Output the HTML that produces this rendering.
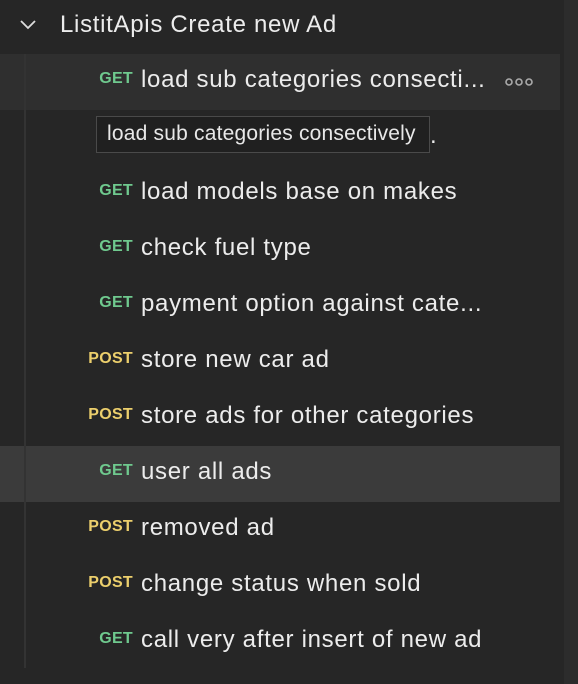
<!DOCTYPE html>
<html><head><style>
body{margin:0;width:578px;height:684px;background:#262626;font-family:"Liberation Sans",sans-serif;position:relative;overflow:hidden}
.strip{position:absolute;left:564px;top:0;width:14px;height:684px;background:#2c2c2c}
.vl{position:absolute;left:24px;top:54px;width:2px;height:614px;background:#333}
.hdr{position:absolute;left:60px;top:11px;font-size:24px;letter-spacing:0.7px;color:#ececec}
.chev{position:absolute;left:18px;top:14px}
.row{position:absolute;left:0;width:560px;height:56px}
.m{position:absolute;right:427px;top:16px;font-size:16px;font-weight:bold;letter-spacing:0.3px}
.g{color:#6fc98e}.p{color:#eccf6c}
.t{position:absolute;left:141px;top:12px;font-size:24px;letter-spacing:0.7px;color:#ececec;white-space:nowrap;overflow:hidden}
.tip{position:absolute;left:96px;top:116px;width:334px;height:37px;background:#202020;border:1px solid #4a4a4a;box-sizing:border-box}
.tip span{position:absolute;left:10px;top:5px;font-size:21px;letter-spacing:0.2px;color:#e8e8e8;white-space:nowrap}
</style></head><body>
<div class="strip"></div>
<div class="row" style="top:54px;background:#2f2f2f"></div>
<div class="row" style="top:446px;background:#3b3b3b"></div>
<div class="vl"></div>
<svg class="chev" width="20" height="20"><path d="M3 7 L10 14 L17 7" stroke="#ddd" stroke-width="1.8" fill="none"/></svg>
<div class="hdr">ListitApis Create new Ad</div>
<div class="row" style="top:54px"><span class="m g">GET</span><span class="t">load sub categories consecti...</span>
<svg style="position:absolute;left:504px;top:22px" width="32" height="12"><g fill="none" stroke="#aaa" stroke-width="1.6"><circle cx="5" cy="6" r="3"/><circle cx="15" cy="6" r="3"/><circle cx="25" cy="6" r="3"/></g></svg></div>
<div class="row" style="top:110px"><span class="m g">GET</span><span class="t" style="left:430px">.</span></div>
<div class="row" style="top:166px"><span class="m g">GET</span><span class="t">load models base on makes</span></div>
<div class="row" style="top:222px"><span class="m g">GET</span><span class="t">check fuel type</span></div>
<div class="row" style="top:278px"><span class="m g">GET</span><span class="t">payment option against cate...</span></div>
<div class="row" style="top:334px"><span class="m p">POST</span><span class="t">store new car ad</span></div>
<div class="row" style="top:390px"><span class="m p">POST</span><span class="t">store ads for other categories</span></div>
<div class="row" style="top:446px"><span class="m g">GET</span><span class="t">user all ads</span></div>
<div class="row" style="top:502px"><span class="m p">POST</span><span class="t">removed ad</span></div>
<div class="row" style="top:558px"><span class="m p">POST</span><span class="t">change status when sold</span></div>
<div class="row" style="top:614px"><span class="m g">GET</span><span class="t">call very after insert of new ad</span></div>
<div class="tip"><span>load sub categories consectively</span></div>
</body></html>
